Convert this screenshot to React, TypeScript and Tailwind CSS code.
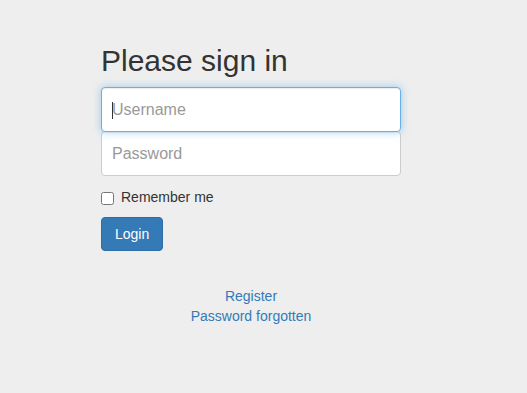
import { useState } from 'react';

export default function App() {
  const [username, setUsername] = useState('');
  const [password, setPassword] = useState('');
  const [remember, setRemember] = useState(false);

  return (
    <div className="min-h-[393px] bg-[#eeeeee] text-[14px] leading-[20px] text-[#333333] [font-family:'Liberation_Sans',Arial,sans-serif]">
      <div className="ml-[101px] w-[300px] pt-[44px]">
        <form onSubmit={(e) => e.preventDefault()}>
          <h2 className="mb-[10px] text-[30px] font-normal leading-[1.1]">Please sign in</h2>

          {/* username is shown focused, caret drawn since headless caret blinks */}
          <div className="relative z-10">
            <input
              type="text"
              value={username}
              onChange={(e) => setUsername(e.target.value)}
              placeholder="Username"
              className="block h-[45px] w-full rounded-[4px] border border-[#66afe9] bg-white px-[10px] text-[16px] text-[#555555] caret-transparent placeholder:text-[#999999] shadow-[inset_0_1px_1px_rgba(0,0,0,0.075),0_0_8px_rgba(102,175,233,0.6)] outline-none"
            />
            {username === '' && (
              <span className="pointer-events-none absolute left-[11px] top-[15px] h-[17px] w-px bg-[#333333]" />
            )}
          </div>
          <input
            type="password"
            value={password}
            onChange={(e) => setPassword(e.target.value)}
            placeholder="Password"
            className="-mt-px block h-[45px] w-full rounded-[4px] border border-[#cccccc] bg-white px-[10px] text-[16px] text-[#555555] placeholder:text-[#999999] shadow-[inset_0_1px_1px_rgba(0,0,0,0.075)] outline-none"
          />

          {/* Remember me */}
          <div className="mb-[10px] mt-[11px] min-h-[20px]">
            <label className="flex items-start gap-[7px]">
              <input
                type="checkbox"
                checked={remember}
                onChange={(e) => setRemember(e.target.checked)}
                className="mt-[5px] h-[13px] w-[13px]"
              />
              <span>Remember me</span>
            </label>
          </div>

          <button
            type="submit"
            className="h-[34px] rounded-[4px] border border-[#2e6da4] bg-[#337ab7] px-[13px] text-[14px] text-white"
          >
            Login
          </button>
        </form>

        <div className="mt-[35px] flex flex-col items-center">
          <a href="#" className="text-[#337ab7]">Register</a>
          <a href="#" className="text-[#337ab7]">Password forgotten</a>
        </div>
      </div>
    </div>
  );
}
